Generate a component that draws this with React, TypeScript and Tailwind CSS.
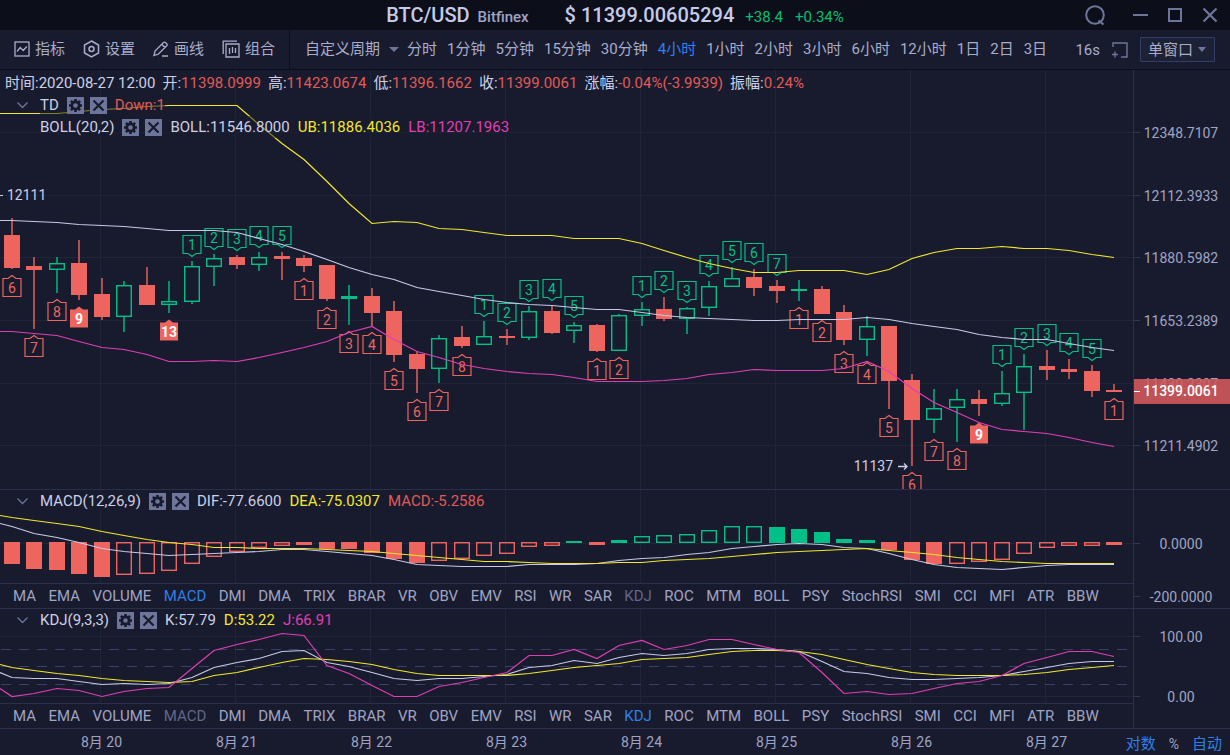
import React, { useState } from 'react'
import clsx from 'clsx'

const RED = '#ee6560'
const GREEN = '#00c087'
const WHITE = '#c6cae8'
const YELLOW = '#f2e72c'
const PINK = '#e03fb4'
const GRID = '#202438'
const TICK = '#2e3550'
const STEP = 135

type Mark = [label: string, side: 'up' | 'down', solid?: boolean]
// high, body top, body bottom, low, rising (1) or falling (0), TD count
type Candle = [number, number, number, number, 0 | 1, Mark?]

const CANDLES: Candle[] = [
  [148, 165, 198, 199, 0, ['6', 'down']],
  [187, 196, 200, 259, 0, ['7', 'down']],
  [187, 193, 200, 223, 1, ['8', 'down']],
  [170, 193, 225, 230, 0, ['9', 'down', true]],
  [208, 224, 247, 250, 0],
  [211, 215, 247, 262, 1],
  [197, 215, 235, 235, 0],
  [211, 231, 235, 243, 1, ['13', 'down', true]],
  [191, 196, 232, 234, 1, ['1', 'up']],
  [184, 188, 197, 216, 1, ['2', 'up']],
  [185, 187, 195, 199, 0, ['3', 'up']],
  [182, 187, 195, 201, 1, ['4', 'up']],
  [182, 186, 189, 210, 0, ['5', 'up']],
  [185, 188, 196, 202, 0, ['1', 'down']],
  [195, 195, 229, 231, 0, ['2', 'down']],
  [215, 226, 229, 255, 1, ['3', 'down']],
  [218, 226, 243, 256, 0, ['4', 'down']],
  [231, 241, 285, 292, 0, ['5', 'down']],
  [282, 284, 299, 323, 0, ['6', 'down']],
  [265, 268, 299, 313, 1, ['7', 'down']],
  [256, 267, 276, 278, 0, ['8', 'down']],
  [251, 266, 275, 275, 1, ['1', 'up']],
  [259, 266, 268, 275, 0, ['2', 'up']],
  [236, 241, 268, 270, 1, ['3', 'up']],
  [235, 241, 263, 264, 0, ['4', 'up']],
  [252, 255, 261, 273, 1, ['5', 'up']],
  [254, 255, 281, 282, 0, ['1', 'down']],
  [244, 245, 281, 281, 1, ['2', 'down']],
  [232, 239, 246, 256, 1, ['1', 'up']],
  [227, 239, 249, 251, 0, ['2', 'up']],
  [237, 238, 249, 264, 1, ['3', 'up']],
  [211, 216, 238, 246, 1, ['4', 'up']],
  [197, 208, 217, 217, 1, ['5', 'up']],
  [199, 207, 218, 226, 0, ['6', 'up']],
  [210, 216, 221, 233, 0, ['7', 'up']],
  [210, 219, 221, 231, 1, ['1', 'down']],
  [216, 219, 244, 244, 0, ['2', 'down']],
  [235, 242, 270, 275, 0, ['3', 'down']],
  [246, 256, 270, 286, 1, ['4', 'down']],
  [256, 256, 311, 339, 0, ['5', 'down']],
  [304, 310, 350, 396, 0, ['6', 'down']],
  [319, 338, 350, 363, 1, ['7', 'down']],
  [319, 329, 338, 372, 1, ['8', 'down']],
  [320, 329, 334, 346, 0, ['9', 'down', true]],
  [301, 323, 334, 336, 1, ['1', 'up']],
  [284, 296, 323, 360, 1, ['2', 'up']],
  [280, 296, 300, 310, 0, ['3', 'up']],
  [289, 299, 302, 309, 0, ['4', 'up']],
  [295, 301, 321, 327, 0, ['5', 'up']],
  [314, 320, 322, 322, 0, ['1', 'down']],
]

// The first value of every line sits on the left edge, the rest on the candles
const BOLL_MID = [150, 150, 151, 152, 154, 155, 156, 158, 160, 160, 160, 162, 168, 174, 181, 189, 197, 204, 209, 217, 221, 225, 229, 232, 234, 235, 237, 239, 239, 242, 245, 247, 248, 249, 250, 250, 249, 249, 249, 247, 249, 253, 256, 259, 264, 267, 269, 269, 273, 277, 280]
const BOLL_UP = [43, 43, 43, 43, 41, 39, 38, 36, 35, 35, 35, 35, 54, 73, 89, 111, 133, 153, 151, 152, 158, 159, 162, 165, 165, 165, 168, 168, 168, 173, 180, 187, 193, 198, 202, 202, 200, 200, 200, 204, 199, 188, 182, 178, 178, 176, 178, 178, 180, 184, 187]
const BOLL_LOW = [261, 261, 263, 265, 271, 277, 279, 284, 291, 291, 290, 291, 287, 282, 277, 271, 262, 256, 269, 281, 287, 294, 298, 301, 303, 304, 307, 311, 311, 311, 310, 308, 304, 302, 299, 300, 300, 300, 298, 291, 301, 318, 332, 342, 352, 359, 361, 363, 367, 372, 376]

const DIF = [33, 36, 43, 47, 52, 58, 61, 63, 65, 64, 63, 62, 61, 59, 59, 61, 63, 65, 69, 74, 75, 76, 76, 76, 74, 74, 74, 73, 70, 68, 67, 64, 62, 58, 56, 54, 53, 54, 57, 58, 63, 69, 74, 77, 78, 79, 77, 75, 74, 74, 74]
const DEA = [25, 27, 30, 33, 36, 41, 45, 49, 52, 54, 57, 57, 58, 58, 58, 59, 60, 61, 63, 65, 67, 69, 71, 71, 72, 73, 73, 73, 72, 72, 70, 69, 68, 66, 64, 62, 61, 60, 59, 58, 60, 62, 64, 67, 69, 71, 72, 73, 73, 73, 73]

// Far edge of each histogram bar and whether it is filled
const BARS: [number, 0 | 1][] = [
  [74, 1], [79, 1], [80, 1], [84, 1], [87, 1], [85, 0], [84, 0], [81, 0], [74, 0], [67, 0],
  [62, 0], [58, 0], [56, 0], [55, 1], [59, 1], [59, 1], [63, 1], [69, 1], [73, 1], [71, 0],
  [69, 0], [66, 0], [64, 0], [57, 0], [56, 0], [51, 1], [55, 1], [50, 1], [46, 0], [45, 0],
  [44, 0], [40, 0], [36, 0], [36, 0], [37, 1], [39, 1], [42, 1], [49, 1], [50, 1], [60, 1],
  [70, 1], [74, 1], [74, 0], [72, 0], [70, 0], [64, 0], [58, 0], [56, 0], [56, 0], [55, 1],
]

const K_LINE = [63, 68, 69, 69, 72, 75, 74, 75, 74, 68, 58, 53, 49, 42, 41, 53, 57, 63, 69, 71, 69, 69, 67, 65, 58, 56, 51, 54, 48, 44, 46, 44, 40, 39, 39, 40, 42, 52, 62, 64, 68, 70, 70, 69, 68, 66, 62, 58, 54, 52, 52]
const D_LINE = [55, 58, 61, 64, 66, 69, 71, 72, 73, 72, 66, 63, 58, 53, 49, 50, 52, 55, 60, 64, 66, 66, 66, 66, 64, 61, 58, 56, 54, 50, 49, 48, 45, 42, 41, 41, 42, 45, 50, 55, 59, 63, 65, 66, 66, 66, 65, 63, 60, 58, 56]
const J_LINE = [79, 87, 84, 79, 81, 87, 82, 79, 78, 59, 41, 35, 30, 24, 26, 56, 64, 76, 87, 87, 77, 73, 68, 63, 46, 46, 40, 49, 36, 31, 40, 36, 30, 30, 35, 40, 43, 63, 84, 82, 85, 84, 79, 74, 72, 66, 54, 48, 42, 42, 47]

const INDICATORS = ['MA', 'EMA', 'VOLUME', 'MACD', 'DMI', 'DMA', 'TRIX', 'BRAR', 'VR', 'OBV', 'EMV', 'RSI', 'WR', 'SAR', 'KDJ', 'ROC', 'MTM', 'BOLL', 'PSY', 'StochRSI', 'SMI', 'CCI', 'MFI', 'ATR', 'BBW']
const PERIODS = ['分时', '1分钟', '5分钟', '15分钟', '30分钟', '4小时', '1小时', '2小时', '3小时', '6小时', '12小时', '1日', '2日', '3日']
const DATES = ['20', '21', '22', '23', '24', '25', '26', '27']
const SUMMARY = [
  ['开', '11398.0999'],
  ['高', '11423.0674'],
  ['低', '11396.1662'],
  ['收', '11399.0061'],
  ['涨幅', '-0.04%(-3.9939)'],
  ['振幅', '0.24%'],
]

const xAt = (i: number) => Math.floor(12 + i * 22.5)

function Line({ values, color }: { values: number[]; color: string }) {
  const points = values.map((v, i) => `${i === 0 ? 0 : xAt(i - 1)},${v + 0.5}`).join(' ')
  return <polyline points={points} fill="none" stroke={color} strokeWidth="1.2" />
}

function Grid({ rows }: { rows: number[] }) {
  return (
    <g fill={GRID}>
      {DATES.map((d, i) => (
        <rect key={d} x={100 + i * STEP} y="0" width="1" height="100%" />
      ))}
      {rows.map((y) => (
        <rect key={y} x="0" y={y} width="100%" height="1" />
      ))}
    </g>
  )
}

function Axis({ ticks, className, children }: { ticks: [number, string][]; className?: string; children?: React.ReactNode }) {
  return (
    <svg className={clsx('w-[97px] shrink-0 border-l border-[#2a3049] text-[14px]', className)} aria-hidden="true">
      {ticks.map(([y, label]) => (
        <g key={label}>
          <rect x="0" y={y} width="6" height="1" fill={TICK} />
          <text x="47" y={y + 6} textAnchor="middle" fill="#a0a4c4">
            {label}
          </text>
        </g>
      ))}
      {children}
    </svg>
  )
}

function TdMark({ x, high, low, mark }: { x: number; high: number; low: number; mark: Mark }) {
  const [label, side, solid] = mark
  const down = side === 'down'
  const tip = down ? low + 6.5 : high - 4.5
  const dir = down ? 1 : -1
  const near = tip + dir * 3
  const far = tip + dir * 21
  const color = down ? RED : GREEN
  return (
    <g>
      <path
        d={`M${x} ${tip}L${x + 4} ${near}H${x + 9}V${far}H${x - 9}V${near}H${x - 4}Z`}
        fill={solid ? color : 'none'}
        stroke={color}
        strokeWidth={solid ? 0 : 1.2}
      />
      <text
        x={x}
        y={(near + far) / 2 + 5}
        textAnchor="middle"
        fill={solid ? '#ffffff' : color}
        fontWeight={solid ? 700 : 400}
      >
        {label}
      </text>
    </g>
  )
}

function GearBox({ name }: { name: string }) {
  return (
    <button type="button" aria-label={`${name} 设置`} className="h-[17px] w-[17px] bg-[#6e759b]">
      <svg viewBox="0 0 17 17" className="block h-full w-full text-[#181b2d]" stroke="currentColor" fill="none">
        <circle cx="8.5" cy="8.5" r="3.7" strokeWidth="2.8" />
        {[0, 45, 90, 135].map((a) => (
          <path key={a} d="M8.5 2v2.4M8.5 12.6V15" strokeWidth="2.6" transform={`rotate(${a} 8.5 8.5)`} />
        ))}
      </svg>
    </button>
  )
}

function CloseBox({ name }: { name: string }) {
  return (
    <button type="button" aria-label={`${name} 关闭`} className="h-[17px] w-[17px] bg-[#6e759b]">
      <svg viewBox="0 0 17 17" className="block h-full w-full text-[#181b2d]" stroke="currentColor" fill="none">
        <path d="M3.5 3.5l10 10M13.5 3.5l-10 10" strokeWidth="2.2" />
      </svg>
    </button>
  )
}

interface LegendProps {
  name: string
  collapsible?: boolean
  children: React.ReactNode
}

function Legend({ name, collapsible = true, children }: LegendProps) {
  return (
    <div className="flex h-[22px] items-center">
      <div className="w-10 shrink-0 pl-[17px]">
        {collapsible && (
          <button type="button" aria-label={`${name} 折叠`} className="block">
            <svg width="11" height="8" fill="none" stroke="#6e759b" strokeWidth="1.3">
              <path d="M0.5 1.5l5 5 5-5" />
            </svg>
          </button>
        )}
      </div>
      <div className="flex items-center gap-2 bg-[#181b2d]/50 whitespace-nowrap">
        <span>{name}</span>
        <span className="flex gap-[6px]">
          <GearBox name={name} />
          <CloseBox name={name} />
        </span>
        {children}
      </div>
    </div>
  )
}

function IndicatorTabs({ active, muted, onPick }: { active: string; muted: string; onPick: (name: string) => void }) {
  return (
    <nav className="h-[25px] overflow-hidden border-t border-[#2a3049] pl-[13px] text-[#a0a4c4]">
      <div className="flex h-full w-[1086px] items-center justify-between">
        {INDICATORS.map((name) => (
          <button
            key={name}
            type="button"
            onClick={() => onPick(name)}
            className={clsx(name === active && 'text-[#2f80e4]', name === muted && 'text-[#62678a]')}
          >
            {name}
          </button>
        ))}
      </div>
    </nav>
  )
}

function TitleBar() {
  return (
    <header className="grid h-[30px] shrink-0 grid-cols-[1fr_auto_1fr] items-center bg-[#0c0f1a]">
      <div />
      <div className="flex items-baseline whitespace-nowrap">
        <h1 className="text-[20px] leading-[30px] font-medium text-[#c6cae8]">BTC/USD</h1>
        <span className="ml-2 font-medium text-[#a0a4c4]">Bitfinex</span>
        <span className="ml-9 text-[20px] leading-[30px] font-medium text-[#c6cae8]">$ 11399.00605294</span>
        <span className="ml-[11px] text-[#00c076]">+38.4</span>
        <span className="ml-3 text-[#00c076]">+0.34%</span>
      </div>
      <div className="flex items-center justify-end gap-[15px] pr-[10px] text-[#6e759b]">
        <button type="button" aria-label="刷新" className="mr-[10px]">
          <svg width="20" height="22" className="block" fill="none" stroke="currentColor" strokeWidth="2">
            <circle cx="10" cy="11" r="8.8" />
            <path d="M13.5 16.5l5 4" strokeWidth="2.2" />
          </svg>
        </button>
        <button type="button" aria-label="最小化">
          <svg width="20" height="20" className="block" stroke="currentColor" strokeWidth="2">
            <path d="M3 10h15" />
          </svg>
        </button>
        <button type="button" aria-label="最大化">
          <svg width="20" height="20" className="block" fill="none" stroke="currentColor" strokeWidth="2">
            <rect x="4" y="4" width="12" height="12" />
          </svg>
        </button>
        <button type="button" aria-label="关闭">
          <svg width="20" height="20" className="block" stroke="currentColor" strokeWidth="2.2">
            <path d="M3.5 3.5l13 13M16.5 3.5l-13 13" />
          </svg>
        </button>
      </div>
    </header>
  )
}

function Toolbar({ period, onPeriod }: { period: string; onPeriod: (p: string) => void }) {
  return (
    <div className="flex h-10 shrink-0 items-center border-b border-[#0c0f1a] whitespace-nowrap text-[#a9adcb]">
      <div className="flex h-full items-center gap-[18px] border-r border-[#0c0f1a] pr-[14px] pb-px pl-[14px]">
        <button type="button" className="flex items-center gap-[5px]">
          <svg width="16" height="16" fill="none" stroke="currentColor" strokeWidth="1.3">
            <rect x="1" y="1" width="14" height="14" />
            <path d="M3 10.5l3.2-4 3 3 3.6-4" />
          </svg>
          指标
        </button>
        <button type="button" className="flex items-center gap-[5px]">
          <svg width="17" height="18" fill="none" stroke="currentColor" strokeWidth="1.5">
            <path d="M8.5 1l7 4v8l-7 4-7-4V5z" />
            <circle cx="8.5" cy="9" r="2.5" />
          </svg>
          设置
        </button>
        <button type="button" className="flex items-center gap-[5px]">
          <svg width="16" height="16" fill="none" stroke="currentColor" strokeWidth="1.3">
            <path d="M1 14.5l1-4.5 8.5-8.5q1-.8 2 0l1.2 1.2q1 1 0 2L5.5 13 1 14.5zM9 3.5l3.2 3.2M9 15h6" />
          </svg>
          画线
        </button>
        <button type="button" className="flex items-center gap-[5px]">
          <svg width="18" height="18" fill="none" stroke="currentColor" strokeWidth="1.3">
            <path d="M1.2 14V1.2H15M4 4h13v13H4zM7.5 8v6M10.5 7v6M13.5 8v5" />
          </svg>
          组合
        </button>
      </div>
      <div className="relative ml-[15px] flex items-center pb-px">
        <select aria-label="自定义周期" className="appearance-none bg-transparent pr-[26px] outline-none">
          <option>自定义周期</option>
        </select>
        <svg width="10" height="5" className="pointer-events-none absolute right-[8px] fill-[#6e759b]">
          <path d="M0 0h10L5 5z" />
        </svg>
      </div>
      <div className="flex items-center gap-[10px] pb-px">
        {PERIODS.map((p) => (
          <button
            key={p}
            type="button"
            onClick={() => onPeriod(p)}
            className={clsx(p === period && 'text-[#2f80f0]')}
          >
            {p}
          </button>
        ))}
      </div>
      <div className="ml-auto flex items-center pr-[15px]">
        <span>16s</span>
        <button type="button" aria-label="添加窗口" className="ml-3">
          <svg width="16" height="16" className="block" fill="none" stroke="#6e759b" strokeWidth="1.4">
            <path d="M1 5V1h14v14H9M0 12.5h6M3 9.5v6" />
          </svg>
        </button>
        <div className="relative ml-3 flex items-center">
          <select
            aria-label="窗口布局"
            className="h-[25px] w-[75px] appearance-none rounded-[1px] border border-[#343d66] bg-[#1d2136] pl-[7px] outline-none"
          >
            <option>单窗口</option>
          </select>
          <svg width="8" height="5" className="pointer-events-none absolute right-[9px] fill-[#6e759b]">
            <path d="M0 0h8L4 5z" />
          </svg>
        </div>
      </div>
    </div>
  )
}

function PriceChart() {
  return (
    <section className="flex min-h-[420px] flex-1 border-b border-[#2a3049]">
      <div className="relative min-w-0 flex-1 overflow-hidden">
        <svg className="absolute inset-0 h-full w-full text-[14px]" role="img" aria-label="BTC/USD 4小时">
          <Grid rows={[62, 125, 187, 250, 313, 375]} />
          {CANDLES.map(([high, top, bottom, low, up], i) => {
            const x = xAt(i)
            const color = up ? GREEN : RED
            return (
              <g key={i} stroke={color} strokeWidth="1.4">
                <path d={`M${x} ${high}V${top}M${x} ${bottom}V${low}`} />
                {up && bottom - top > 3 ? (
                  <rect x={x - 7.3} y={top + 0.7} width="14.6" height={bottom - top - 1.4} fill="none" />
                ) : (
                  <rect x={x - 8} y={top} width="16" height={bottom - top} fill={color} stroke="none" />
                )}
              </g>
            )
          })}
          {CANDLES.map(([high, , , low, , mark], i) =>
            mark ? <TdMark key={i} x={xAt(i)} high={high} low={low} mark={mark} /> : null,
          )}
          <Line values={BOLL_UP} color={YELLOW} />
          <Line values={BOLL_MID} color={WHITE} />
          <Line values={BOLL_LOW} color={PINK} />
          <g fill="#cdd0e8">
            <rect x="0" y="125" width="3" height="1" />
            <text x="7" y="130">
              12111
            </text>
            <text x="893" y="401" textAnchor="end">
              11137
            </text>
            <path d="M898 396.5h9M904 393.5l3 3-3 3" fill="none" stroke="#cdd0e8" strokeWidth="1.4" />
          </g>
        </svg>
        <div className="relative pt-[2px]">
          <div className="flex h-[22px] items-center gap-[7px] pl-[5px] whitespace-nowrap">
            <span>时间:2020-08-27 12:00</span>
            {SUMMARY.map(([label, value]) => (
              <span key={label}>
                {label}:<span className="text-[#e05a58]">{value}</span>
              </span>
            ))}
          </div>
          <Legend name="TD">
            <span className="text-[#e05a58]">Down:1</span>
          </Legend>
          <Legend name="BOLL(20,2)" collapsible={false}>
            <span>BOLL:11546.8000</span>
            <span className="text-[#f2e72c]">UB:11886.4036</span>
            <span className="text-[#e03fb4]">LB:11207.1963</span>
          </Legend>
        </div>
      </div>
      <Axis
        ticks={[
          [62, '12348.7107'],
          [125, '12112.3933'],
          [187, '11880.5982'],
          [250, '11653.2389'],
          [313, '11430.2307'],
          [375, '11211.4902'],
        ]}
      >
        <rect x="-1" y="309" width="98" height="25" fill="#d65a5c" fillOpacity="0.88" />
        <rect x="0" y="321" width="6" height="1" fill="#ffffff" />
        <text x="47" y="326" textAnchor="middle" fill="#ffffff" className="font-medium">
          11399.0061
        </text>
      </Axis>
    </section>
  )
}

function MacdChart({ active, onPick }: { active: string; onPick: (name: string) => void }) {
  return (
    <section className="flex h-[119px] shrink-0 border-b border-[#2a3049]">
      <div className="min-w-0 flex-1">
        <div className="relative h-[93px] overflow-hidden">
          <svg className="absolute inset-0 h-full w-full" role="img" aria-label="MACD">
            <Grid rows={[53]} />
            {BARS.map(([end, filled], i) => {
              const x = xAt(i)
              const color = end > 52 ? RED : GREEN
              const base = end > 52 ? 52 : 53
              const top = Math.min(base, end)
              const height = Math.abs(end - base)
              return filled ? (
                <rect key={i} x={x - 8} y={top} width="16" height={height} fill={color} />
              ) : (
                <rect key={i} x={x - 7.3} y={top + 0.7} width="14.6" height={height - 1.4} fill="none" stroke={color} strokeWidth="1.4" />
              )
            })}
            <Line values={DIF} color={WHITE} />
            <Line values={DEA} color={YELLOW} />
          </svg>
          <div className="relative">
            <Legend name="MACD(12,26,9)">
              <span>DIF:-77.6600</span>
              <span className="text-[#f2e72c]">DEA:-75.0307</span>
              <span className="text-[#e05a58]">MACD:-5.2586</span>
            </Legend>
          </div>
        </div>
        <IndicatorTabs active={active} muted="KDJ" onPick={onPick} />
      </div>
      <Axis
        className="h-full"
        ticks={[
          [53, '0.0000'],
          [106, '-200.0000'],
        ]}
      />
    </section>
  )
}

function KdjChart({ active, onPick }: { active: string; onPick: (name: string) => void }) {
  return (
    <section className="flex h-[120px] shrink-0 border-b border-[#2a3049]">
      <div className="min-w-0 flex-1">
        <div className="relative h-[94px] overflow-hidden">
          <svg className="absolute inset-0 h-full w-full" role="img" aria-label="KDJ">
            <Grid rows={[27, 87]} />
            {[40, 57, 75].map((y) => (
              <line key={y} x1="1" x2="100%" y1={y + 0.5} y2={y + 0.5} stroke="#3a4168" strokeDasharray="10 8" />
            ))}
            <Line values={K_LINE} color={WHITE} />
            <Line values={D_LINE} color={YELLOW} />
            <Line values={J_LINE} color={PINK} />
          </svg>
          <div className="relative">
            <Legend name="KDJ(9,3,3)">
              <span>K:57.79</span>
              <span className="text-[#f2e72c]">D:53.22</span>
              <span className="text-[#e03fb4]">J:66.91</span>
            </Legend>
          </div>
        </div>
        <IndicatorTabs active={active} muted="MACD" onPick={onPick} />
      </div>
      <Axis
        className="h-full"
        ticks={[
          [27, '100.00'],
          [87, '0.00'],
        ]}
      />
    </section>
  )
}

export default function App() {
  const [period, setPeriod] = useState('4小时')
  const [upper, setUpper] = useState('MACD')
  const [lower, setLower] = useState('KDJ')

  return (
    <div className="flex min-h-screen flex-col overflow-hidden bg-[#181b2d] font-[Roboto,'Noto_Sans_CJK_SC',sans-serif] text-[15px] leading-[22px] text-[#cdd0e8]">
      <TitleBar />
      <Toolbar period={period} onPeriod={setPeriod} />
      <PriceChart />
      <MacdChart active={upper} onPick={setUpper} />
      <KdjChart active={lower} onPick={setLower} />
      <footer className="flex h-[26px] shrink-0 items-center justify-between">
        <div className="flex pl-[34px] text-[14px] text-[#a0a4c4]">
          {DATES.map((d) => (
            <span key={d} className="w-[135px] shrink-0 text-center">
              8月 {d}
            </span>
          ))}
        </div>
        <div className="-ml-6 flex items-center gap-[13px] pt-1 pr-2 whitespace-nowrap text-[#2f80e4]">
          <button type="button">对数</button>
          <button type="button" className="text-[14px] text-[#a0a4c4]">
            %
          </button>
          <button type="button">自动</button>
        </div>
      </footer>
    </div>
  )
}
